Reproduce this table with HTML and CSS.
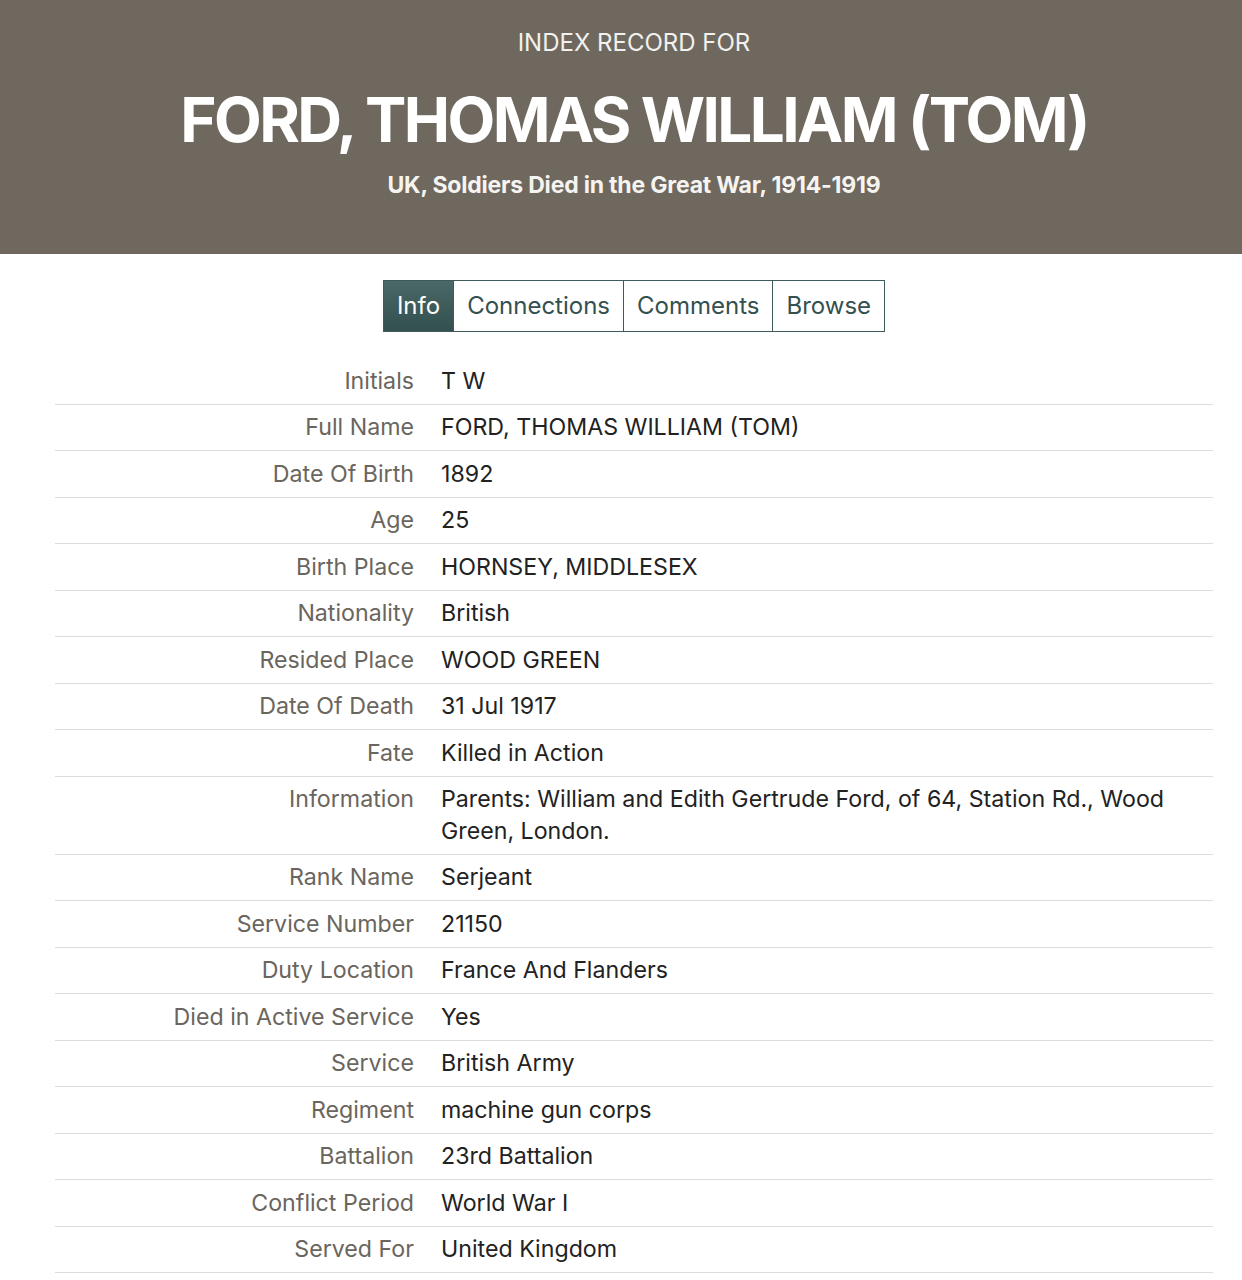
FILE: index.html
```html
<!DOCTYPE html>
<html lang="en">
<head>
<meta charset="utf-8">
<title>Index record for FORD, THOMAS WILLIAM (TOM)</title>
<link rel="stylesheet" href="styles.css">
</head>
<body>
<div class="page">
  <header class="hero">
    <div class="kicker">INDEX RECORD FOR</div>
    <h1 class="title">FORD, THOMAS WILLIAM (TOM)</h1>
    <div class="collection">UK, Soldiers Died in the Great War, 1914-1919</div>
  </header>
  <main class="content">
    <nav class="tabs">
      <a class="tab active">Info</a>
      <a class="tab">Connections</a>
      <a class="tab">Comments</a>
      <a class="tab">Browse</a>
    </nav>
    <dl class="record">
      <div class="row"><dt>Initials</dt><dd>T W</dd></div>
      <div class="row"><dt>Full Name</dt><dd>FORD, THOMAS WILLIAM (TOM)</dd></div>
      <div class="row"><dt>Date Of Birth</dt><dd>1892</dd></div>
      <div class="row"><dt>Age</dt><dd>25</dd></div>
      <div class="row"><dt>Birth Place</dt><dd>HORNSEY, MIDDLESEX</dd></div>
      <div class="row"><dt>Nationality</dt><dd>British</dd></div>
      <div class="row"><dt>Resided Place</dt><dd>WOOD GREEN</dd></div>
      <div class="row"><dt>Date Of Death</dt><dd>31 Jul 1917</dd></div>
      <div class="row"><dt>Fate</dt><dd>Killed in Action</dd></div>
      <div class="row"><dt>Information</dt><dd>Parents: William and Edith Gertrude Ford, of 64, Station Rd., Wood Green, London.</dd></div>
      <div class="row"><dt>Rank Name</dt><dd>Serjeant</dd></div>
      <div class="row"><dt>Service Number</dt><dd>21150</dd></div>
      <div class="row"><dt>Duty Location</dt><dd>France And Flanders</dd></div>
      <div class="row"><dt>Died in Active Service</dt><dd>Yes</dd></div>
      <div class="row"><dt>Service</dt><dd>British Army</dd></div>
      <div class="row"><dt>Regiment</dt><dd>machine gun corps</dd></div>
      <div class="row"><dt>Battalion</dt><dd>23rd Battalion</dd></div>
      <div class="row"><dt>Conflict Period</dt><dd>World War I</dd></div>
      <div class="row"><dt>Served For</dt><dd>United Kingdom</dd></div>
    </dl>
  </main>
</div>
</body>
</html>
```

FILE: styles.css
```css
html {
  overflow-x: hidden;
}
body {
  margin: 0;
  background: #ffffff;
  font-family: Inter, "Noto Sans", "Liberation Sans", sans-serif;
  color: #222222;
}
.page {
  width: 1268px;
}
.hero {
  background: #6e685f;
  color: #ffffff;
  text-align: center;
  height: 254px;
  box-sizing: border-box;
  padding-top: 28px;
}
.kicker {
  font-size: 24px;
  line-height: 30px;
  font-weight: 400;
  color: #f3f1ee;
}
.title {
  margin: 24px 0 0;
  font-size: 62px;
  line-height: 76px;
  font-weight: 700;
  letter-spacing: -2.6px;
}
.collection {
  margin-top: 13px;
  font-size: 23px;
  line-height: 28px;
  font-weight: 700;
  letter-spacing: -0.2px;
  color: #f6f4f0;
}
.content {
  padding: 26px 55px 0;
}
.tabs {
  display: flex;
  justify-content: center;
}
.tab {
  display: block;
  height: 52px;
  box-sizing: border-box;
  padding: 0 13px;
  border: 1px solid #3e5a5a;
  border-left-width: 0;
  font-size: 24px;
  line-height: 50px;
  color: #34504f;
  background: #ffffff;
}
.tab:first-child {
  border-left-width: 1px;
}
.tab.active {
  background: linear-gradient(#4a6867, #33504f);
  color: #ffffff;
}
.record {
  margin: 26px 0 0;
  width: 1158px;
}
.row {
  display: grid;
  grid-template-columns: 359px 1fr;
  column-gap: 27px;
  border-bottom: 1px solid #dcdcdc;
  padding: 7.5px 0 6.5px;
  font-size: 23.2px;
  line-height: 31.5px;
}
.row dt {
  text-align: right;
  color: #6a655d;
}
.row dd {
  margin: 0;
  color: #222222;
  padding-right: 30px;
}
```
